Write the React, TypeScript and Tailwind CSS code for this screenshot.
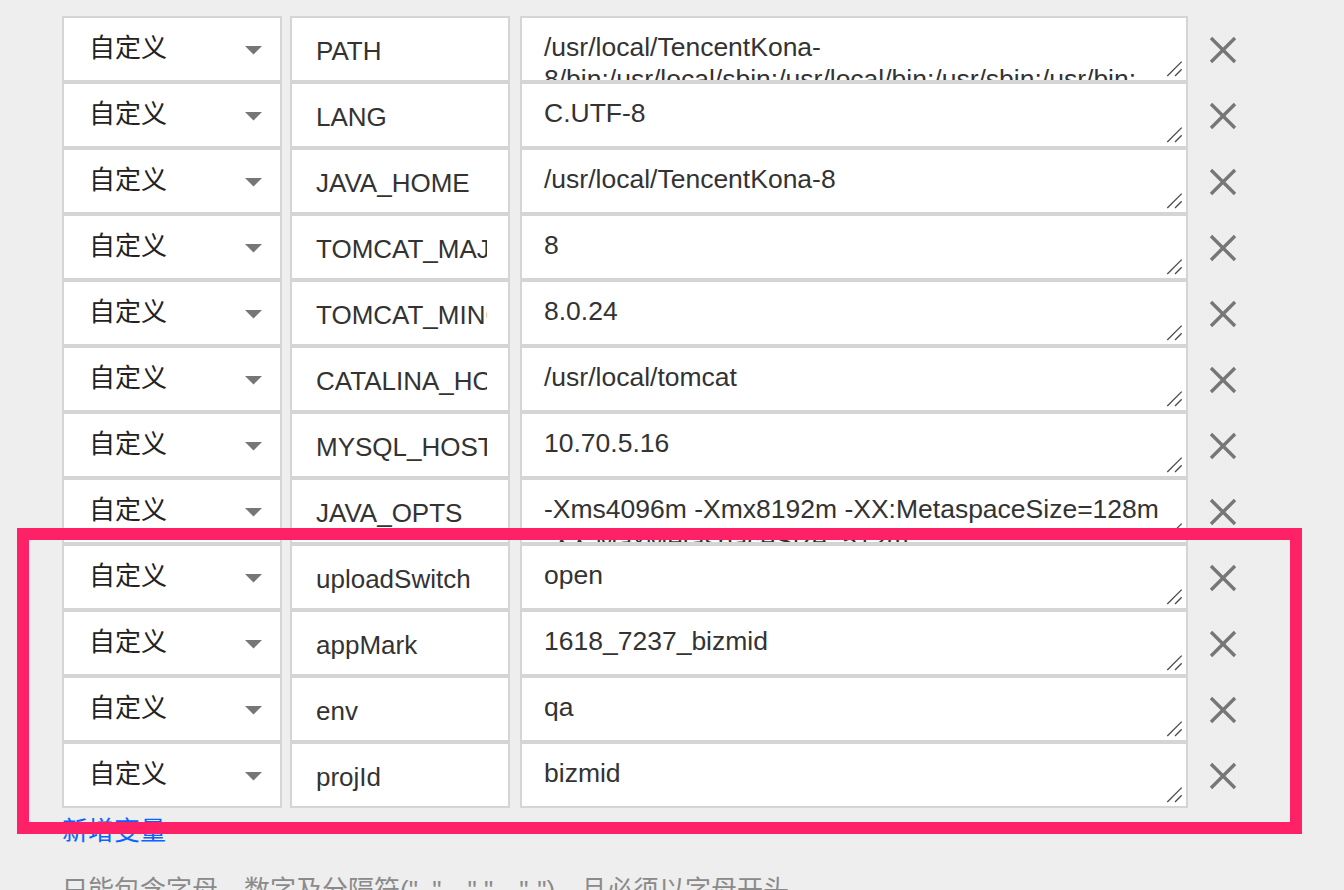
import React from "react";

type Row = { key: string; lines: string[] };

const rows: Row[] = [
  { key: "PATH", lines: ["/usr/local/TencentKona-", "8/bin:/usr/local/sbin:/usr/local/bin:/usr/sbin:/usr/bin:"] },
  { key: "LANG", lines: ["C.UTF-8"] },
  { key: "JAVA_HOME", lines: ["/usr/local/TencentKona-8"] },
  { key: "TOMCAT_MAJOR_VERSION", lines: ["8"] },
  { key: "TOMCAT_MINOR_VERSION", lines: ["8.0.24"] },
  { key: "CATALINA_HOME", lines: ["/usr/local/tomcat"] },
  { key: "MYSQL_HOST", lines: ["10.70.5.16"] },
  { key: "JAVA_OPTS", lines: ["-Xms4096m -Xmx8192m -XX:MetaspaceSize=128m", "-XX:MaxMetaspaceSize=512m"] },
  { key: "uploadSwitch", lines: ["open"] },
  { key: "appMark", lines: ["1618_7237_bizmid"] },
  { key: "env", lines: ["qa"] },
  { key: "projId", lines: ["bizmid"] },
];

function Caret() {
  return (
    <svg width="17" height="9" viewBox="0 0 17 9" className="shrink-0 mt-[3px]">
      <polygon points="0,0 17,0 8.5,8.5" fill="#767676" />
    </svg>
  );
}

function CloseIcon() {
  return (
    <svg width="28" height="28" viewBox="0 0 28 28">
      <line x1="2" y1="2" x2="26" y2="26" stroke="#767676" strokeWidth="3.4" />
      <line x1="26" y1="2" x2="2" y2="26" stroke="#767676" strokeWidth="3.4" />
    </svg>
  );
}

function ResizeHandle() {
  return (
    <svg width="20" height="20" viewBox="0 0 20 20" className="absolute right-0 bottom-0">
      <line x1="1.3" y1="16" x2="15.7" y2="1.6" stroke="#4a4a4a" strokeWidth="1.3" />
      <line x1="9" y1="16" x2="15.7" y2="9.3" stroke="#4a4a4a" strokeWidth="1.3" />
    </svg>
  );
}

export default function App() {
  return (
    <div
      className="relative w-[1344px] h-[890px] overflow-hidden bg-[#eeeeee] text-[#333333]"
      style={{ fontFamily: '"Liberation Sans", "Noto Sans CJK SC", sans-serif' }}
    >
      <div className="pl-[62px] pt-[16px]">
        {rows.map((r) => (
          <div key={r.key} className="flex h-[66px]">
            <div className="w-[220px] h-[66px] border-2 border-[#d5d5d5] bg-white flex items-center justify-between pl-[25px] pr-[18px]">
              <span className="text-[26px] leading-[32px] text-[#222222] mt-[-2px]">自定义</span>
              <Caret />
            </div>
            <div className="ml-[8px] w-[220px] h-[66px] border-2 border-[#d5d5d5] bg-white flex items-center pl-[24px] pr-[21px]">
              <span className="block flex-1 min-w-0 overflow-hidden whitespace-nowrap text-[26px] leading-[30px] mt-[3px]">
                {r.key}
              </span>
            </div>
            <div className="relative ml-[10px] w-[668px] h-[66px] border-2 border-[#d5d5d5] bg-white overflow-hidden pl-[22px] pt-[13px]">
              {r.lines.map((l, i) => (
                <div key={i} className="whitespace-nowrap text-[26.5px] leading-[32px]">
                  {l}
                </div>
              ))}
              <ResizeHandle />
            </div>
            <div className="ml-[21px] flex items-center pt-[2px]">
              <CloseIcon />
            </div>
          </div>
        ))}
        <div className="mt-[7px] text-[26px] leading-[32px] text-[#0a63ff]">新增变量</div>
        <div className="mt-[27px] text-[26px] leading-[32px] text-[#8a8a8a] whitespace-nowrap">
          只能包含字母、数字及分隔符("_"、"."、"-")，且必须以字母开头
        </div>
      </div>
      <div className="absolute left-[17px] top-[528px] w-[1285px] h-[306px] border-[12px] border-[#ff2168] pointer-events-none" />
    </div>
  );
}
